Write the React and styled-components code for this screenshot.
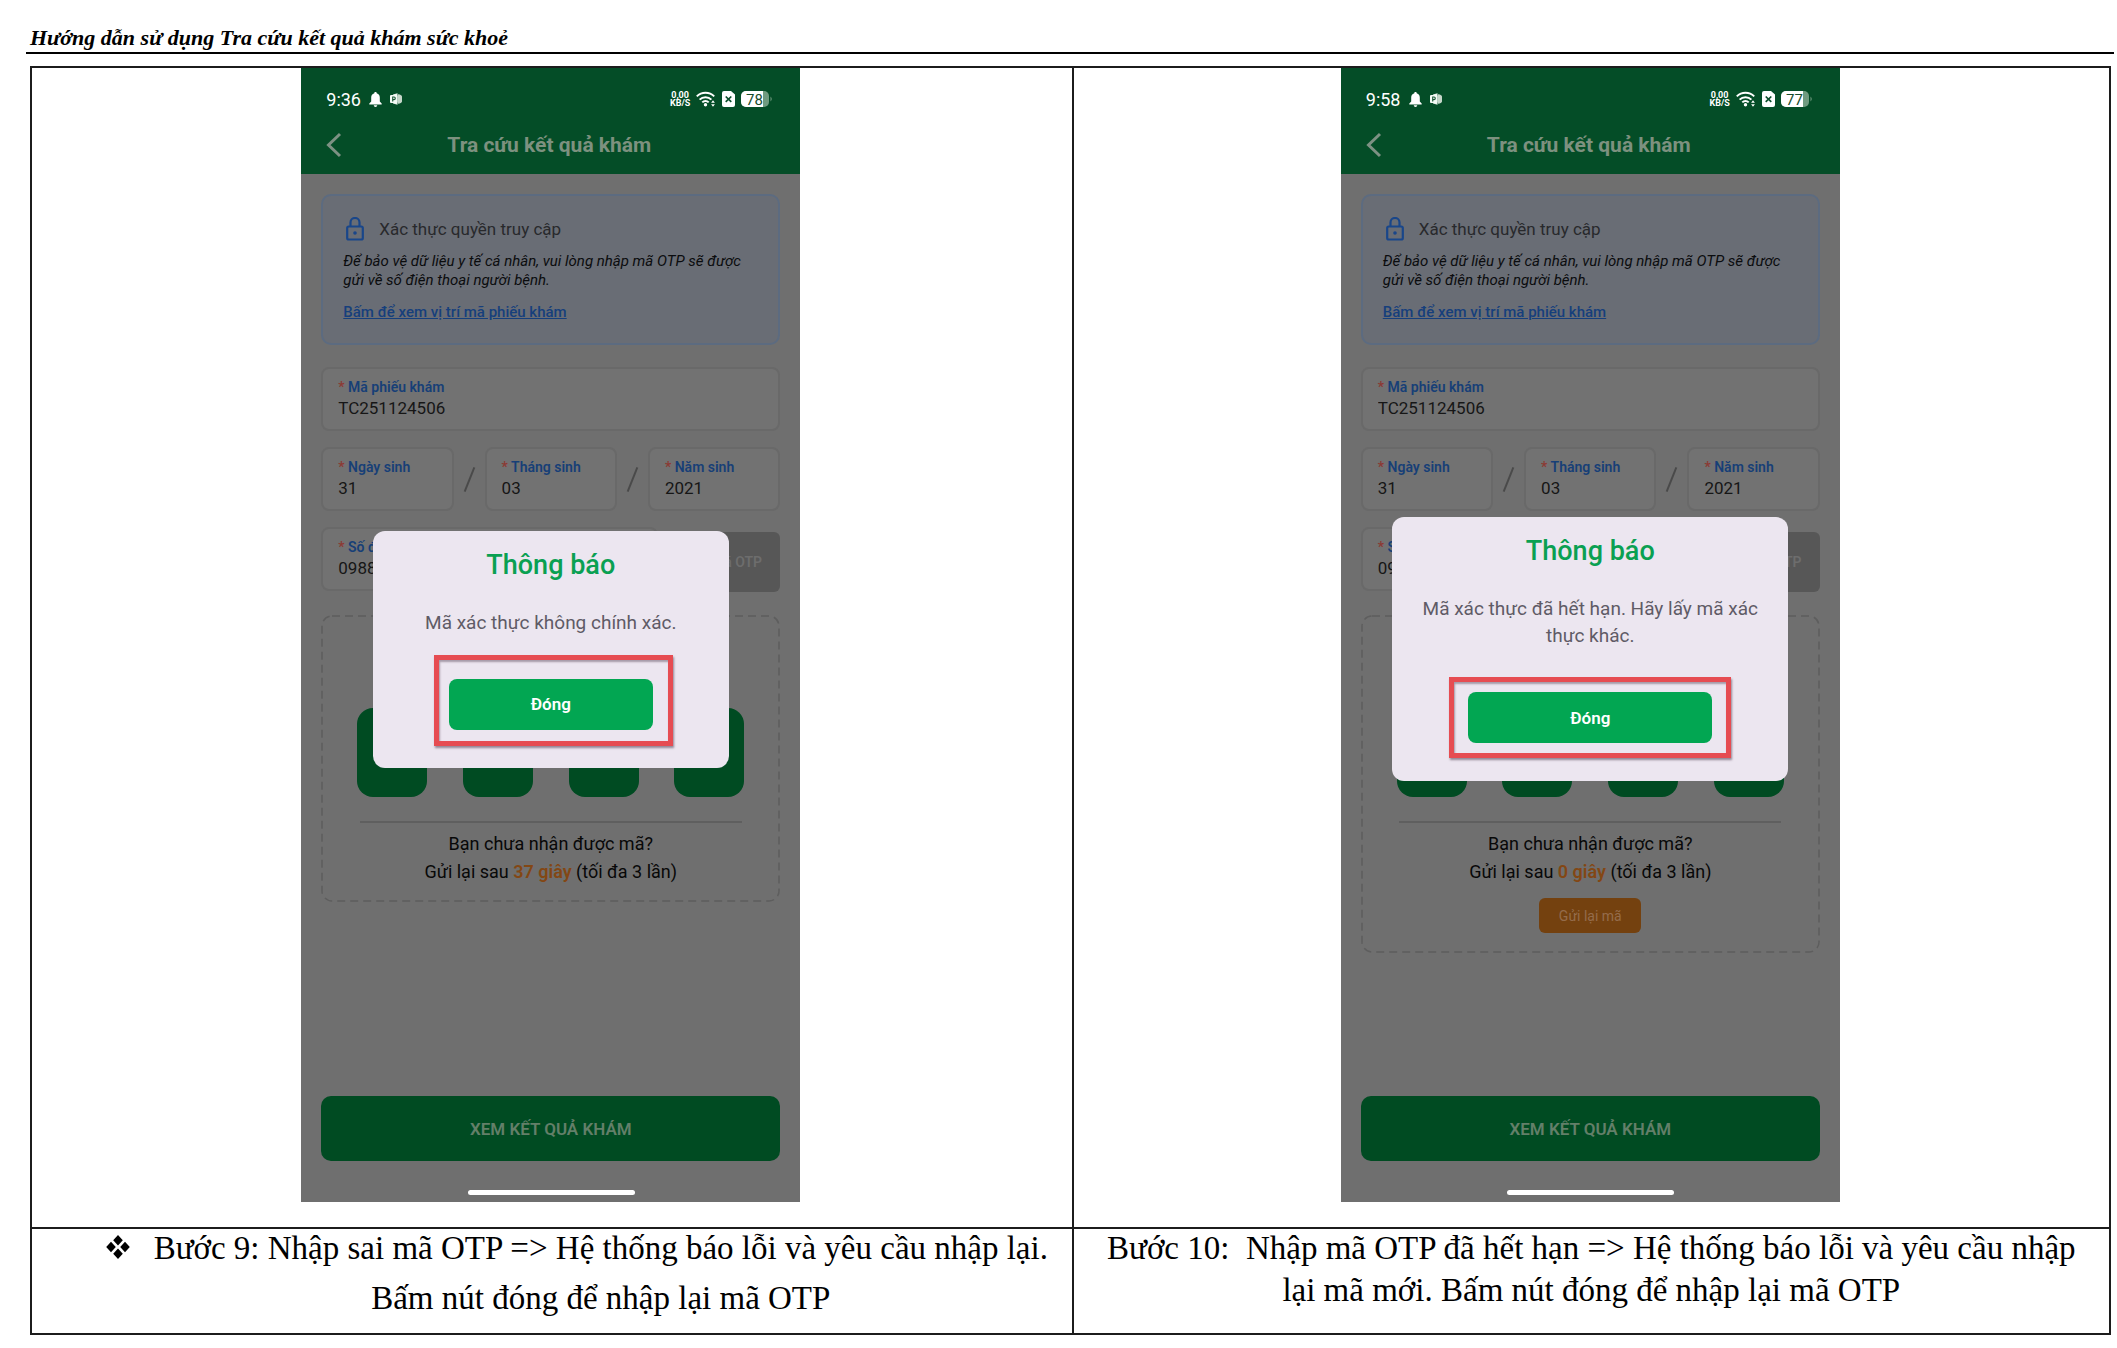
import React from "react";
import styled, { createGlobalStyle } from "styled-components";

const GlobalStyle = createGlobalStyle`
  * { box-sizing: border-box; }
  body { margin: 0; background: #fff; color: #000; font-family: "Liberation Serif", "Times New Roman", serif; }
  button, input { font-family: inherit; }
`;

const Page = styled.main`
  padding: 22px 3px 0 26px;
`;

const DocHeader = styled.header`
  height: 32px;
  padding-left: 4px;
  border-bottom: 2px solid #000;
  font-size: 22px;
  line-height: 32px;
  font-weight: 700;
  font-style: italic;
`;

const StepTable = styled.table`
  width: calc(100% - 7px);
  margin: 12px 3px 0 4px;
  border-collapse: collapse;
  table-layout: fixed;
`;

const ShotCell = styled.td`
  width: ${(p) => p.$width};
  border: 2px solid #1c1c1c;
  padding: 0 2px 25px 0;
  vertical-align: top;
`;

const CaptionCell = styled.td`
  height: 106px;
  border: 2px solid #1c1c1c;
  padding: 0 12px 0 ${(p) => p.$indent};
  vertical-align: top;
  text-align: center;
  font-size: 33px;
  line-height: 38px;
`;

const Caption = styled.div`
  display: flex;
  justify-content: center;
  white-space: nowrap;
`;

const CaptionLines = styled.div`
  display: flex;
  flex-direction: column;
  gap: ${(p) => p.$gap};
`;

const BulletIcon = styled.svg`
  flex: none;
  width: 24px;
  height: 24px;
  margin: 6px 24px 0 0;
`;

const Phone = styled.section`
  position: relative;
  display: flex;
  flex-direction: column;
  width: 499px;
  height: 1134px;
  margin: 0 auto;
  background: #6f6f6f;
  font-family: Roboto, "Liberation Sans", sans-serif;
`;

const AppBar = styled.div`
  padding: 17px 28px 0 25px;
  height: 106px;
  background: #044d27;
`;

const StatusBar = styled.div`
  display: flex;
  align-items: center;
  justify-content: space-between;
  height: 28px;
  color: #fff;
  font-size: 18px;
`;

const StatusGroup = styled.div`
  display: flex;
  align-items: center;
  gap: ${(p) => p.$gap};
`;

const Speed = styled.span`
  font-size: 9px;
  line-height: 8px;
  font-weight: 700;
  text-align: center;
`;

const TitleRow = styled.div`
  display: grid;
  grid-template-columns: 24px 1fr 24px;
  align-items: center;
  height: 28px;
  margin-top: 18px;
`;

const BackButton = styled.button`
  display: flex;
  padding: 0;
  border: 0;
  background: none;
`;

const Title = styled.h2`
  margin: 0;
  text-align: center;
  color: #7d917f;
  font-size: 21px;
  font-weight: 700;
`;

const Content = styled.div`
  flex: 1;
  display: flex;
  flex-direction: column;
  gap: 16px;
  padding: 20px 20px 41px;
`;

const InfoCard = styled.div`
  height: 151px;
  margin-bottom: 6px;
  padding: 20px;
  border: 2px solid #5c6b80;
  border-radius: 10px;
  background: #696d75;
`;

const InfoHead = styled.div`
  display: flex;
  align-items: center;
  gap: 12px;
  height: 26px;
  color: #28292c;
  font-size: 17px;
`;

const InfoText = styled.p`
  margin: 10px 0 0;
  color: #0b0c0e;
  font-size: 15px;
  line-height: 19px;
  font-style: italic;
`;

const InfoLink = styled.a`
  display: block;
  margin-top: 12px;
  color: #163f7c;
  font-size: 15px;
  line-height: 20px;
  font-weight: 500;
  text-decoration: underline;
`;

const FieldRow = styled.div`
  display: flex;
  align-items: center;
`;

const Field = styled.label`
  display: block;
  flex: 1 1 0;
  min-width: 0;
  height: 64px;
  padding: 9px 15px;
  border: 2px solid #696969;
  border-radius: 8px;
  background: #727272;
  color: #173f77;
  font-size: 14px;
  line-height: 18px;
  font-weight: 600;
`;

const Required = styled.span`
  color: #8c3a34;
`;

const FieldInput = styled.input`
  display: block;
  width: 100%;
  height: 24px;
  padding: 0;
  border: 0;
  outline: 0;
  background: transparent;
  color: #161616;
  font-size: 17px;
`;

const SlashIcon = styled.svg`
  flex: none;
  width: 31px;
  height: 30px;
`;

const OtpButton = styled.button`
  width: 112px;
  height: 60px;
  margin: 0 0 -6px 10px;
  padding: 0;
  border: 0;
  border-radius: 6px;
  background: #575757;
  color: #6d6d6d;
  font-size: 14px;
  font-weight: 600;
`;

const OtpPanel = styled.div`
  position: relative;
  display: flex;
  flex-direction: column;
  align-items: center;
  margin-top: 8px;
  padding: 93px 36px 16px;
  color: #080808;
  font-size: 18px;
  line-height: 28px;
`;

const DashFrame = styled.svg`
  position: absolute;
  inset: 0;
  width: 100%;
  height: 100%;
`;

const OtpBoxes = styled.div`
  display: flex;
  justify-content: space-between;
  width: 100%;
`;

const OtpBox = styled.input`
  width: 70px;
  height: 89px;
  padding: 0;
  border: 0;
  border-radius: 16px;
  background: #004b22;
`;

const Divider = styled.hr`
  width: 382px;
  margin: 24px 0 7px;
  border: 0;
  border-top: 2px solid #5f5f5f;
`;

const Countdown = styled.strong`
  color: #834714;
  font-weight: 600;
`;

const ResendButton = styled.button`
  width: 102px;
  height: 35px;
  margin: 12px 0 4px;
  padding: 0;
  border: 0;
  border-radius: 6px;
  background: #74410f;
  color: #946c4b;
  font-size: 14px;
`;

const SubmitButton = styled.button`
  height: 65px;
  margin-top: auto;
  padding: 0;
  border: 0;
  border-radius: 10px;
  background: #004b22;
  color: #637f69;
  font-size: 17px;
  font-weight: 600;
`;

const HomeBar = styled.div`
  position: absolute;
  left: 50%;
  bottom: 7px;
  width: 167px;
  height: 5px;
  margin-left: -83px;
  border-radius: 3px;
  background: #fff;
`;

const Overlay = styled.div`
  position: absolute;
  inset: 28px 0 0;
  display: flex;
  align-items: center;
  justify-content: center;
`;

const Dialog = styled.div`
  display: flex;
  flex-direction: column;
  align-items: center;
  width: ${(p) => p.$width};
  padding: 18px 26px 38px;
  border-radius: 12px;
  background: #ece6f0;
`;

const DialogTitle = styled.h3`
  margin: 0;
  color: #0aa052;
  font-size: 27px;
  line-height: 32px;
  font-weight: 500;
`;

const DialogText = styled.p`
  margin: 28px 0 43px;
  color: #5f5b66;
  text-align: center;
  font-size: 19px;
  line-height: 27px;
`;

const CloseWrap = styled.div`
  position: relative;
  width: ${(p) => p.$width};
`;

const CloseButton = styled.button`
  width: 100%;
  height: 51px;
  padding: 0;
  border: 0;
  border-radius: 8px;
  background: #02a652;
  color: #fff;
  font-size: 17px;
  font-weight: 600;
`;

const Highlight = styled.div`
  position: absolute;
  inset: ${(p) => p.$inset};
  border: 5px solid #e64c52;
  box-shadow: 1px 2px 2px rgba(60, 40, 60, 0.5), inset 1px 2px 2px rgba(60, 40, 60, 0.4);
  pointer-events: none;
`;

const BellIcon = () => (
  <svg width="13" height="15" viewBox="0 0 13 15" fill="#fff">
    <path d="M6.500 0c.8 0 1.200.5 1.200 1.200C9.700 1.800 10.800 3.400 10.800 5.600V9.500l1.900 2v.9H.3v-.9l1.900-2V5.600C2.200 3.400 3.300 1.800 5.300 1.200 5.300.5 5.700 0 6.500 0zM4.800 13.200h3.400c0 1-.8 1.700-1.700 1.700s-1.700-.7-1.700-1.700z" />
  </svg>
);

const AppIcon = () => (
  <svg width="12" height="12" viewBox="0 0 12 12">
    <path d="M3 1.500 7.500.3v11.400L3 10.500z" fill="#eef5ef" />
    <path d="M8 1.200a4.800 4.800 0 0 1 0 9.600z" fill="#c5d6c9" />
    <rect y="2" width="7.500" height="8" rx="1" fill="#f4faf5" />
    <path d="M2.700 8.500V4h1.300a1.300 1.300 0 0 1 0 2.600H2.700" fill="none" stroke="#145331" strokeWidth="1.100" />
  </svg>
);

const WifiIcon = () => (
  <svg width="20" height="16" viewBox="0 0 20 16" fill="none" stroke="#fff" strokeWidth="2">
    <path d="M.8 5.400a12.300 12.300 0 0 1 17.400 0M3.600 8.600a8.300 8.300 0 0 1 11.800 0M6.300 11.400a4.500 4.500 0 0 1 6.400 0" />
    <circle cx="9.500" cy="13.800" r="1.700" fill="#fff" stroke="none" />
    <path d="m17 9.200 1.900 2.500h-3.800zM17 15.700l-1.900-2.500h3.800z" fill="#fff" stroke="none" />
  </svg>
);

const SimIcon = () => (
  <svg width="13" height="16" viewBox="0 0 13 16">
    <path d="M2 0h7l4 3.500V14a2 2 0 0 1-2 2H2a2 2 0 0 1-2-2V2a2 2 0 0 1 2-2z" fill="#fff" />
    <path d="m3.700 5.500 5.600 5.400M9.300 5.500l-5.600 5.400" stroke="#0b4f2c" strokeWidth="1.700" />
  </svg>
);

const BatteryIcon = ({ level }) => (
  <svg width="31" height="16" viewBox="0 0 31 16">
    <rect width="28" height="16" rx="5" fill="#6f9a7f" />
    <path d="M5 0h17v16H5a5 5 0 0 1-5-5V5a5 5 0 0 1 5-5z" fill="#fff" />
    <path d="M29.500 5.500a3.500 3.500 0 0 1 0 5z" fill="#6f9a7f" />
    <text x="13.500" y="13.500" textAnchor="middle" fontSize="15" fill="#174c2c">{level}</text>
  </svg>
);

const BackIcon = () => (
  <svg width="16" height="26" viewBox="0 0 16 26" fill="none" stroke="#7d9183" strokeWidth="3">
    <path d="M14 2 2.500 13 14 24" />
  </svg>
);

const LockIcon = () => (
  <svg width="24" height="24" viewBox="0 0 24 24" fill="none" stroke="#19468a" strokeWidth="2.200">
    <rect x="4.200" y="9.500" width="15.600" height="13" rx="1.500" />
    <path d="M7.500 9.500V5.500a4.500 4.500 0 0 1 9 0v4" />
    <circle cx="12" cy="16" r="1.800" fill="#19468a" stroke="none" />
  </svg>
);

const Slash = () => (
  <SlashIcon viewBox="0 0 32 30" stroke="#4a4a4a" strokeWidth="2">
    <path d="M21 3 11 28" />
  </SlashIcon>
);

const Bullet = () => (
  <BulletIcon viewBox="0 0 24 24">
    <path d="M12 0l4.800 5.200L12 10.400 7.200 5.200zM12 13.600l4.800 5.200L12 24l-4.800-5.200zM5 6.800 9.800 12 5 17.200.2 12zM19 6.800l4.800 5.200-4.800 5.200-4.800-5.200z" />
  </BulletIcon>
);

const LabeledField = ({ label, value }) => (
  <Field>
    <Required>*</Required> {label}
    <FieldInput defaultValue={value} />
  </Field>
);

function PhoneScreen({ time, level, seconds, resend, dialog }) {
  return (
    <Phone>
      <AppBar>
        <StatusBar>
          <StatusGroup $gap="8px">
            {time}
            <BellIcon />
            <AppIcon />
          </StatusGroup>
          <StatusGroup $gap="6px">
            <Speed>0,00<br />KB/S</Speed>
            <WifiIcon />
            <SimIcon />
            <BatteryIcon level={level} />
          </StatusGroup>
        </StatusBar>
        <TitleRow>
          <BackButton aria-label="Quay lại"><BackIcon /></BackButton>
          <Title>Tra cứu kết quả khám</Title>
        </TitleRow>
      </AppBar>
      <Content>
        <InfoCard>
          <InfoHead><LockIcon />Xác thực quyền truy cập</InfoHead>
          <InfoText>Để bảo vệ dữ liệu y tế cá nhân, vui lòng nhập mã OTP sẽ được gửi về số điện thoại người bệnh.</InfoText>
          <InfoLink href="#vi-tri">Bấm để xem vị trí mã phiếu khám</InfoLink>
        </InfoCard>
        <FieldRow><LabeledField label="Mã phiếu khám" value="TC251124506" /></FieldRow>
        <FieldRow>
          <LabeledField label="Ngày sinh" value="31" />
          <Slash />
          <LabeledField label="Tháng sinh" value="03" />
          <Slash />
          <LabeledField label="Năm sinh" value="2021" />
        </FieldRow>
        <FieldRow>
          <LabeledField label="Số điện thoại" value="0988" />
          <OtpButton>Lấy mã OTP</OtpButton>
        </FieldRow>
        <OtpPanel>
          <DashFrame>
            <rect x="1" y="1" width="457" height={resend ? 336 : 285} rx="10" fill="none" stroke="#5e5e5e" strokeWidth="1.500" strokeDasharray="8 5" />
          </DashFrame>
          <OtpBoxes>
            {[1, 2, 3, 4].map((n) => <OtpBox key={n} aria-label={`Số ${n}`} />)}
          </OtpBoxes>
          <Divider />
          <div>Bạn chưa nhận được mã?</div>
          <div>Gửi lại sau <Countdown>{seconds} giây</Countdown> (tối đa 3 lần)</div>
          {resend && <ResendButton>Gửi lại mã</ResendButton>}
        </OtpPanel>
        <SubmitButton>XEM KẾT QUẢ KHÁM</SubmitButton>
      </Content>
      <HomeBar />
      <Overlay>
        <Dialog role="dialog" aria-label="Thông báo" $width={dialog.width}>
          <DialogTitle>Thông báo</DialogTitle>
          <DialogText>{dialog.text}</DialogText>
          <CloseWrap $width={dialog.buttonWidth}>
            <CloseButton>Đóng</CloseButton>
            <Highlight $inset={dialog.frame} />
          </CloseWrap>
        </Dialog>
      </Overlay>
    </Phone>
  );
}

export default function App() {
  return (
    <>
      <GlobalStyle />
      <Page>
        <DocHeader>Hướng dẫn sử dụng Tra cứu kết quả khám sức khoẻ</DocHeader>
        <StepTable>
          <tbody>
            <tr>
              <ShotCell $width="50.100%">
                <PhoneScreen
                  time="9:36"
                  level="78"
                  seconds="37"
                  dialog={{ width: "356px", buttonWidth: "204px", text: "Mã xác thực không chính xác.", frame: "-24px -20px -16px -15px" }}
                />
              </ShotCell>
              <ShotCell>
                <PhoneScreen
                  time="9:58"
                  level="77"
                  seconds="0"
                  resend
                  dialog={{ width: "396px", buttonWidth: "244px", text: "Mã xác thực đã hết hạn. Hãy lấy mã xác thực khác.", frame: "-15px -19px -15px -19px" }}
                />
              </ShotCell>
            </tr>
            <tr>
              <CaptionCell $indent="62px">
                <Caption>
                  <Bullet />
                  <CaptionLines $gap="12px">
                    <span>{"Bước 9: Nhập sai mã OTP => Hệ thống báo lỗi và yêu cầu nhập lại."}</span>
                    <span>Bấm nút đóng để nhập lại mã OTP</span>
                  </CaptionLines>
                </Caption>
              </CaptionCell>
              <CaptionCell $indent="12px">
                <Caption>
                  <CaptionLines $gap="4px">
                    <span>{"Bước 10: \u00a0Nhập mã OTP đã hết hạn => Hệ thống báo lỗi và yêu cầu nhập"}</span>
                    <span>lại mã mới. Bấm nút đóng để nhập lại mã OTP</span>
                  </CaptionLines>
                </Caption>
              </CaptionCell>
            </tr>
          </tbody>
        </StepTable>
      </Page>
    </>
  );
}
